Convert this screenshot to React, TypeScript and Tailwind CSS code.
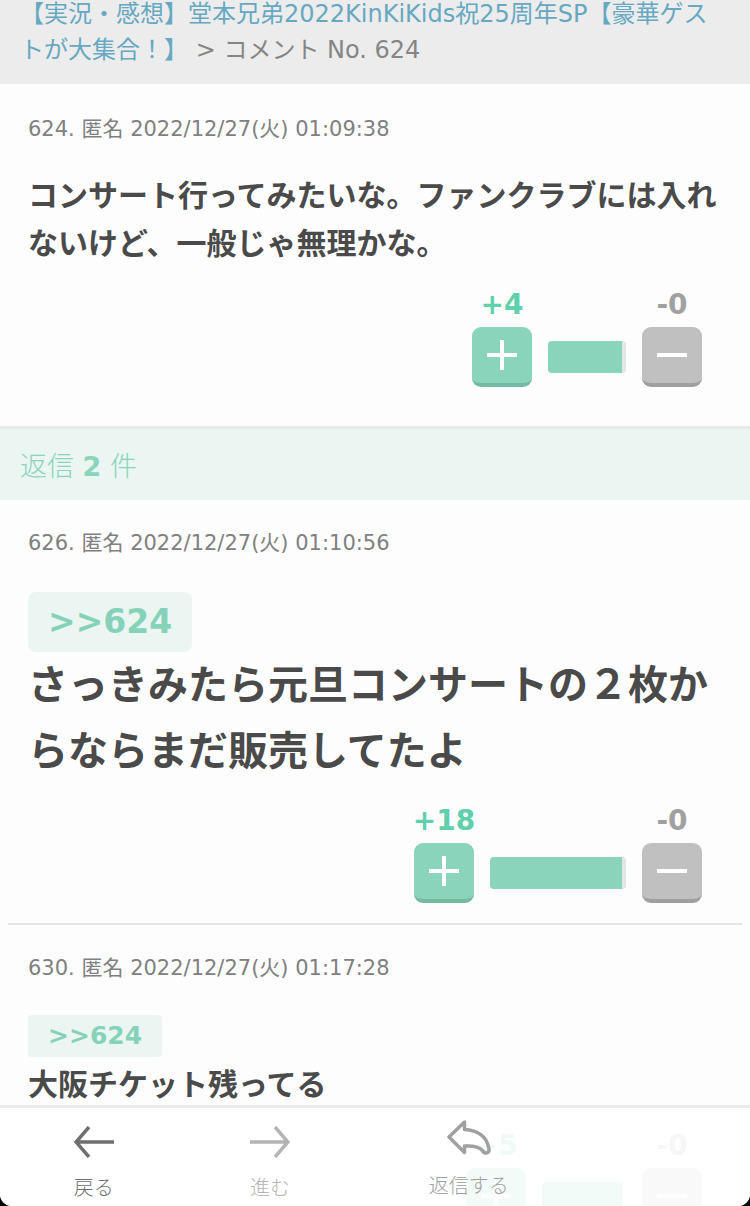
import clsx from "clsx";

interface Comment {
  no: number;
  time: string;
  replyTo?: number;
  body: string;
  plus: number;
  minus: number;
  large?: boolean;
  barWidth: string;
}

const topic: Comment = {
  no: 624,
  time: "2022/12/27(火) 01:09:38",
  body: "コンサート行ってみたいな。ファンクラブには入れないけど、一般じゃ無理かな。",
  plus: 4,
  minus: 0,
  barWidth: "w-[78px]",
};

const replies: Comment[] = [
  {
    no: 626,
    time: "2022/12/27(火) 01:10:56",
    replyTo: 624,
    body: "さっきみたら元旦コンサートの２枚からならまだ販売してたよ",
    plus: 18,
    minus: 0,
    large: true,
    barWidth: "w-[136px]",
  },
  {
    no: 630,
    time: "2022/12/27(火) 01:17:28",
    replyTo: 624,
    body: "大阪チケット残ってる",
    plus: 5,
    minus: 0,
    barWidth: "w-[84px]",
  },
];

function VoteButton({ kind, count }: { kind: "plus" | "minus"; count: number }) {
  const plus = kind === "plus";
  return (
    <div className="flex w-[60px] flex-col items-center gap-2">
      <span
        className={clsx(
          "whitespace-nowrap text-[28px] leading-7 font-bold",
          plus ? "text-[#5fd0ab]" : "text-[#a0a0a0]"
        )}
      >
        {plus ? "+" : "-"}
        {count}
      </span>
      <button
        aria-label={plus ? "プラス" : "マイナス"}
        className={clsx(
          "flex h-[60px] w-full items-center justify-center rounded-[9px] border-b-4",
          plus ? "border-[#74b9a0] bg-[#8bd4bc]" : "border-[#9f9f9f] bg-[#c0c0c0]"
        )}
      >
        <svg width="30" height="30" viewBox="0 0 30 30" fill="none" stroke="#fff" strokeWidth="4">
          <path d="M0 15h30" />
          {plus && <path d="M15 0v30" />}
        </svg>
      </button>
    </div>
  );
}

function Votes({ comment }: { comment: Comment }) {
  return (
    <div className="mt-[23px] flex items-end justify-end gap-4 pr-5">
      <VoteButton kind="plus" count={comment.plus} />
      <div
        className={clsx("mb-[14px] h-8 rounded border-r-4 border-[#e2e6e4] bg-[#8bd4bc]", comment.barWidth)}
      />
      <VoteButton kind="minus" count={comment.minus} />
    </div>
  );
}

function CommentBlock({ comment }: { comment: Comment }) {
  const { no, time, replyTo, body, large } = comment;
  return (
    <>
      <p className="text-[21px] leading-[30px] text-[#808080]">
        {no}. 匿名 {time}
      </p>
      {replyTo && (
        <a
          href={`#${replyTo}`}
          className={clsx(
            "block w-fit bg-[#ebf5f2] px-5 font-bold text-[#86d2b9]",
            large
              ? "mt-[34px] rounded-lg text-[33px] leading-[60px]"
              : "mt-8 mb-1 rounded-sm text-[25px] leading-[42px]"
          )}
        >
          &gt;&gt;{replyTo}
        </a>
      )}
      <p
        className={clsx(
          "font-semibold text-[#4a4a4a]",
          large ? "text-[40px] leading-[66px]" : "text-[30px] leading-[48px]",
          !replyTo && "mt-7"
        )}
      >
        {body}
      </p>
      <Votes comment={comment} />
    </>
  );
}

function NavBar() {
  return (
    <nav className="absolute inset-x-0 bottom-0 grid h-[101px] grid-cols-[25fr_22fr_31fr_22fr] border-t-3 border-[#ebebeb] bg-white/90 text-[20px] leading-[30px] font-light">
      <button className="flex flex-col items-center gap-[15px] pt-[18px] text-[#707070]">
        <svg width="40" height="32" viewBox="0 0 40 32" fill="none" stroke="currentColor" strokeWidth="3.5">
          <path d="M15 1L2 16l13 15M2 16h38" />
        </svg>
        戻る
      </button>
      <button className="flex flex-col items-center gap-[15px] pt-[18px] text-[#b4b4b4]" disabled>
        <svg width="40" height="32" viewBox="0 0 40 32" fill="none" stroke="currentColor" strokeWidth="3.5">
          <path d="M25 1l13 15-13 15M38 16H0" />
        </svg>
        進む
      </button>
      <button className="flex flex-col items-center gap-[15px] pt-3 text-[#a0a0a0]">
        <svg
          width="44"
          height="36"
          viewBox="0 0 44 36"
          fill="none"
          stroke="currentColor"
          strokeWidth="3.5"
          strokeLinejoin="round"
        >
          <path d="M2 17L17.500 2V9.500C31 10 40 17 42 29C42.500 34 37 34 35.500 30.500C32 26.500 26 25.500 17.500 26V32.500Z" />
        </svg>
        返信する
      </button>
    </nav>
  );
}

export default function App() {
  return (
    <div className="h-screen bg-black font-['DejaVu_Sans','Noto_Sans_CJK_JP',sans-serif]">
      <div className="relative h-full overflow-hidden rounded-b-xl bg-[#fdfdfd]">
        <header className="-mt-1 bg-[#ececec] px-5 pb-4 text-[24px] leading-9 text-[#858585]">
          <a href="#topic" className="text-[#66a8c2]">
            【実況・感想】堂本兄弟2022KinKiKids祝25周年SP【豪華ゲストが大集合！】
          </a>{" "}
          &gt; コメント No. 624
        </header>

        <main>
          <article className="px-7 pt-[30px] pb-[39px]">
            <CommentBlock comment={topic} />
          </article>

          <h2 className="border-t-3 border-[#e8e8e8] bg-[#ebf5f2] px-5 pt-1 text-[27px] leading-[67px] font-light text-[#8bd4bc]">
            返信 <b className="font-bold">2</b> 件
          </h2>

          {replies.map((reply, i) => (
            <article
              key={reply.no}
              className={clsx("mx-2 px-5 pt-7 pb-5", i > 0 && "border-t-2 border-[#e4e4e4]")}
            >
              <CommentBlock comment={reply} />
            </article>
          ))}
        </main>

        <NavBar />
      </div>
    </div>
  );
}
